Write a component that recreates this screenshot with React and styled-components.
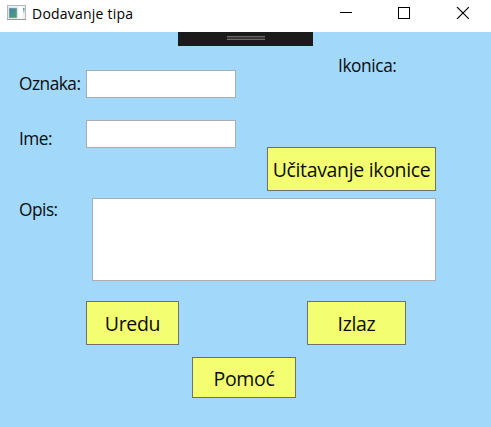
import React from "react";
import styled, { createGlobalStyle } from "styled-components";

const GlobalStyle = createGlobalStyle`
  *, *::before, *::after { box-sizing: border-box; }
  body { margin: 0; background: #a2d8fa; overflow: hidden; }
  button, input, textarea { font: inherit; margin: 0; border-radius: 0; outline: none; }
`;

const Window = styled.div`
  width: 491px;
  height: 427px;
  display: flex;
  flex-direction: column;
  background: #a2d8fa;
  color: #0c0c0c;
  font-family: "Open Sans", "Noto Sans", sans-serif;
`;

const TitleBar = styled.header`
  height: 32px;
  flex: none;
  display: flex;
  background: #fff;
`;

const AppIcon = styled.svg`
  width: 20px;
  height: 16px;
  margin: 5px 0 0 7px;
`;

const Title = styled.h1`
  flex: 1;
  margin: 0 0 0 5px;
  font-size: 14px;
  font-weight: 400;
  line-height: 27px;
  letter-spacing: 0.22px;
  color: #000;
`;

const WindowControls = styled.div`
  display: flex;
  width: 174px;
`;

const ControlButton = styled.button`
  display: flex;
  justify-content: center;
  align-items: flex-start;
  width: 58px;
  padding: 7px 0 0;
  border: 0;
  background: none;
`;

const Content = styled.main`
  position: relative;
  flex: 1;
`;

const DebugBar = styled.div`
  position: absolute;
  top: 0;
  left: 178px;
  width: 135px;
  height: 14px;
  padding: 4px 48px 0 49px;
  background: #1b1b1c;
`;

const Grip = styled.div`
  height: 4px;
  border: solid #6a6a6a;
  border-width: 1px 0;
  background: #38383a;
`;

const UpperForm = styled.section`
  display: flex;
  height: 159px;
`;

const Fields = styled.div`
  width: 267px;
  padding: 38px 0 0 19px;
  display: flex;
  flex-direction: column;
  gap: 22px;
`;

const Field = styled.div`
  display: flex;
  height: 28px;
`;

const Label = styled.label`
  width: ${(p) => p.$width || 67}px;
  flex: none;
  padding-top: ${(p) => p.$top || 0}px;
  font-size: 17.3px;
  line-height: 24px;
  letter-spacing: ${(p) => p.$tracking || -0.5}px;
  white-space: nowrap;
`;

const TextInput = styled.input`
  width: 150px;
  height: 28px;
  padding: 0 4px;
  border: 1px solid #abadb3;
  background: #fff;
`;

const IconPanel = styled.div`
  width: 169px;
  display: flex;
  flex-direction: column;
  justify-content: space-between;
  padding-top: 22px;
`;

const IconCaption = styled(Label)`
  margin-left: 71px;
`;

const Description = styled.section`
  display: flex;
  padding: 7px 0 0 19px;
`;

const TextArea = styled.textarea`
  display: block;
  width: 344px;
  height: 83px;
  border: 1px solid #abadb3;
  background: #fff;
  resize: none;
`;

const ActionButton = styled.button`
  display: flex;
  align-items: center;
  justify-content: center;
  width: ${(p) => p.$width}px;
  height: ${(p) => p.$height || 44}px;
  padding: ${(p) => p.$drop || 0}px 0 0;
  border: 1px solid #707070;
  background: #f3ff70;
  color: #0c0c0c;
  font-size: 19.5px;
  letter-spacing: -0.34px;
  white-space: nowrap;
`;

const Actions = styled.div`
  display: flex;
  justify-content: space-between;
  width: 320px;
  margin: 20px 0 0 86px;
`;

const HelpRow = styled.div`
  margin: 12px 0 0 192px;
`;

export default function App() {
  return (
    <Window>
      <GlobalStyle />
      <TitleBar>
        <AppIcon viewBox="0 0 20 16" aria-hidden="true">
          <defs>
            <linearGradient id="pane" x1="0" y1="0" x2="1" y2="1">
              <stop offset="0" stopColor="#427fa8" />
              <stop offset="1" stopColor="#4fa56f" />
            </linearGradient>
            <linearGradient id="side" x1="0" y1="0" x2="0" y2="1">
              <stop offset="0" stopColor="#4c8a9c" />
              <stop offset="1" stopColor="#f0f2f3" />
            </linearGradient>
          </defs>
          <rect x="0.5" y="0.5" width="18" height="14" fill="#f1f2f3" stroke="#b5b7ba" />
          <path d="M0 14.5h19" stroke="#97999c" />
          <rect x="2" y="3" width="8" height="10" fill="url(#pane)" stroke="#b7c5cf" strokeWidth=".6" />
          <rect x="11.5" y="2" width="4" height="11" fill="#fff" />
          <rect x="16" y="3" width="1.5" height="6" fill="url(#side)" />
        </AppIcon>
        <Title>Dodavanje tipa</Title>
        <WindowControls>
          <ControlButton aria-label="Minimize">
            <svg width="12" height="12"><path d="M0 5.5h12" stroke="#000" /></svg>
          </ControlButton>
          <ControlButton aria-label="Maximize">
            <svg width="12" height="12"><rect x=".5" y=".5" width="11" height="11" fill="none" stroke="#000" /></svg>
          </ControlButton>
          <ControlButton aria-label="Close">
            <svg width="14" height="12"><path d="M2 0l12 12M14 0L2 12" stroke="#000" strokeWidth="1.1" /></svg>
          </ControlButton>
        </WindowControls>
      </TitleBar>
      <Content>
        <DebugBar><Grip /></DebugBar>
        <UpperForm>
          <Fields>
            <Field>
              <Label htmlFor="oznaka" $top={2}>Oznaka:</Label>
              <TextInput id="oznaka" />
            </Field>
            <Field>
              <Label htmlFor="ime" $top={7}>Ime:</Label>
              <TextInput id="ime" />
            </Field>
          </Fields>
          <IconPanel>
            <IconCaption as="span" $tracking={-0.4}>Ikonica:</IconCaption>
            <ActionButton $width={169}>Učitavanje ikonice</ActionButton>
          </IconPanel>
        </UpperForm>
        <Description>
          <Label htmlFor="opis" $width={73}>Opis:</Label>
          <TextArea id="opis" />
        </Description>
        <Actions>
          <ActionButton $width={93}>Uredu</ActionButton>
          <ActionButton $width={99}>Izlaz</ActionButton>
        </Actions>
        <HelpRow>
          <ActionButton $width={104} $height={41} $drop={2}>Pomoć</ActionButton>
        </HelpRow>
      </Content>
    </Window>
  );
}
